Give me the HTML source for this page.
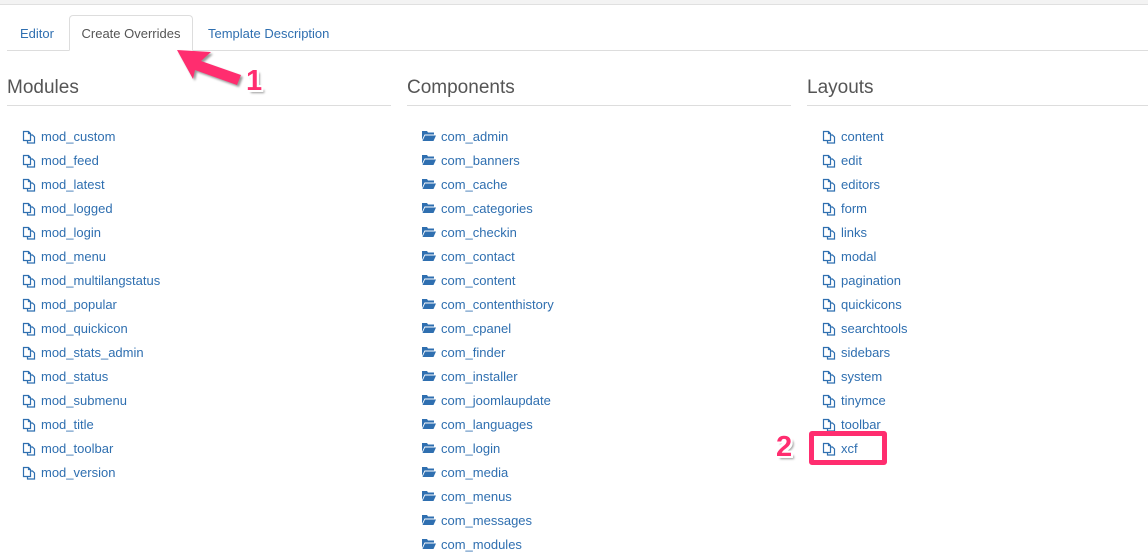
<!DOCTYPE html>
<html><head><style>
body{margin:0;width:1148px;height:550px;overflow:hidden;background:#fff;font-family:"Liberation Sans",Arial,sans-serif;position:relative}
.top{position:absolute;left:0;top:0;width:1148px;height:4px;background:#f3f3f3;border-bottom:1px solid #e0e0e0}
.tabs{position:absolute;left:7px;top:50px;width:1141px;border-top:1px solid #ddd}
.tab{position:absolute;top:16px;height:35px;line-height:35px;font-size:13px;color:#2f6fb0}
.tab.active{color:#555;border:1px solid #ddd;border-bottom:1px solid #fff;border-radius:4px 4px 0 0;background:#fff;height:34px;top:15px;line-height:36px}
.col{position:absolute;top:78px}
.col h3{margin:0;font-weight:normal;font-size:19px;color:#555;height:27px;line-height:20px;border-bottom:1px solid #ddd}
.col ul{list-style:none;margin:19px 0 0;padding:0}
.col li{height:24px;line-height:24px;font-size:13px;color:#2f6fb0;padding-left:15px;position:relative}
.col li svg{position:absolute;left:15px;top:5px}
.col li span{margin-left:19px}
.num{position:absolute;font-size:29px;font-weight:bold;color:#ff2d6f;text-shadow:2px 0 0 #fff,-2px 0 0 #fff,0 2px 0 #fff,0 -2px 0 #fff,2px 2px 0 #fff,-2px -2px 0 #fff,2px -2px 0 #fff,-2px 2px 0 #fff,3px 3px 2px #999}
</style></head><body>
<div class="top"></div>
<div class="tabs"></div>
<div class="tab" style="left:20px">Editor</div>
<div class="tab active" style="left:69px;width:122px;text-align:center">Create Overrides</div>
<div class="tab" style="left:208px">Template Description</div>

<div class="col" style="left:7px;width:384px"><h3>Modules</h3><ul id="m"></ul></div>
<div class="col" style="left:407px;width:384px"><h3>Components</h3><ul id="c"></ul></div>
<div class="col" style="left:807px;width:341px"><h3>Layouts</h3><ul id="l"></ul></div>

<div style="position:absolute;left:809px;top:431px;width:68px;height:24px;border:5px solid #ff2d6f;border-radius:3px"></div>
<div class="num" style="left:776px;top:431px">2</div>
<div class="num" style="left:246px;top:65px">1</div>
<svg style="position:absolute;left:0;top:0" width="300" height="100"><polygon points="177,50 211,52 201,61 241,75 237,85 195,70 193,79" fill="#ff2d6f" style="filter:drop-shadow(2px 2px 1px #999)"/></svg>

<script>
var file='<svg width="14" height="14" viewBox="0 0 14 14" fill="none" stroke="#2f6fb0" stroke-width="1.2"><path d="M1.5 1.5h5l2 2v7h-7z"/><path d="M6.5 1.5v2h2"/><path d="M8.5 5h2l2 2v6h-7v-2.5"/></svg>';
var fold='<svg width="14" height="12" viewBox="0 0 14 12"><path d="M0 1h5l1 1.5h6v2H2.5L0 10z" fill="#2f6fb0"/><path d="M3 5.5h11l-2.5 5.5H0.5z" fill="#2f6fb0"/></svg>';
function f(id,arr,ic){document.getElementById(id).innerHTML=arr.map(function(t){return '<li>'+ic+'<span>'+t+'</span></li>'}).join('')}
f('m',['mod_custom','mod_feed','mod_latest','mod_logged','mod_login','mod_menu','mod_multilangstatus','mod_popular','mod_quickicon','mod_stats_admin','mod_status','mod_submenu','mod_title','mod_toolbar','mod_version'],file);
f('c',['com_admin','com_banners','com_cache','com_categories','com_checkin','com_contact','com_content','com_contenthistory','com_cpanel','com_finder','com_installer','com_joomlaupdate','com_languages','com_login','com_media','com_menus','com_messages','com_modules'],fold);
f('l',['content','edit','editors','form','links','modal','pagination','quickicons','searchtools','sidebars','system','tinymce','toolbar','xcf'],file);
</script>
</body></html>
